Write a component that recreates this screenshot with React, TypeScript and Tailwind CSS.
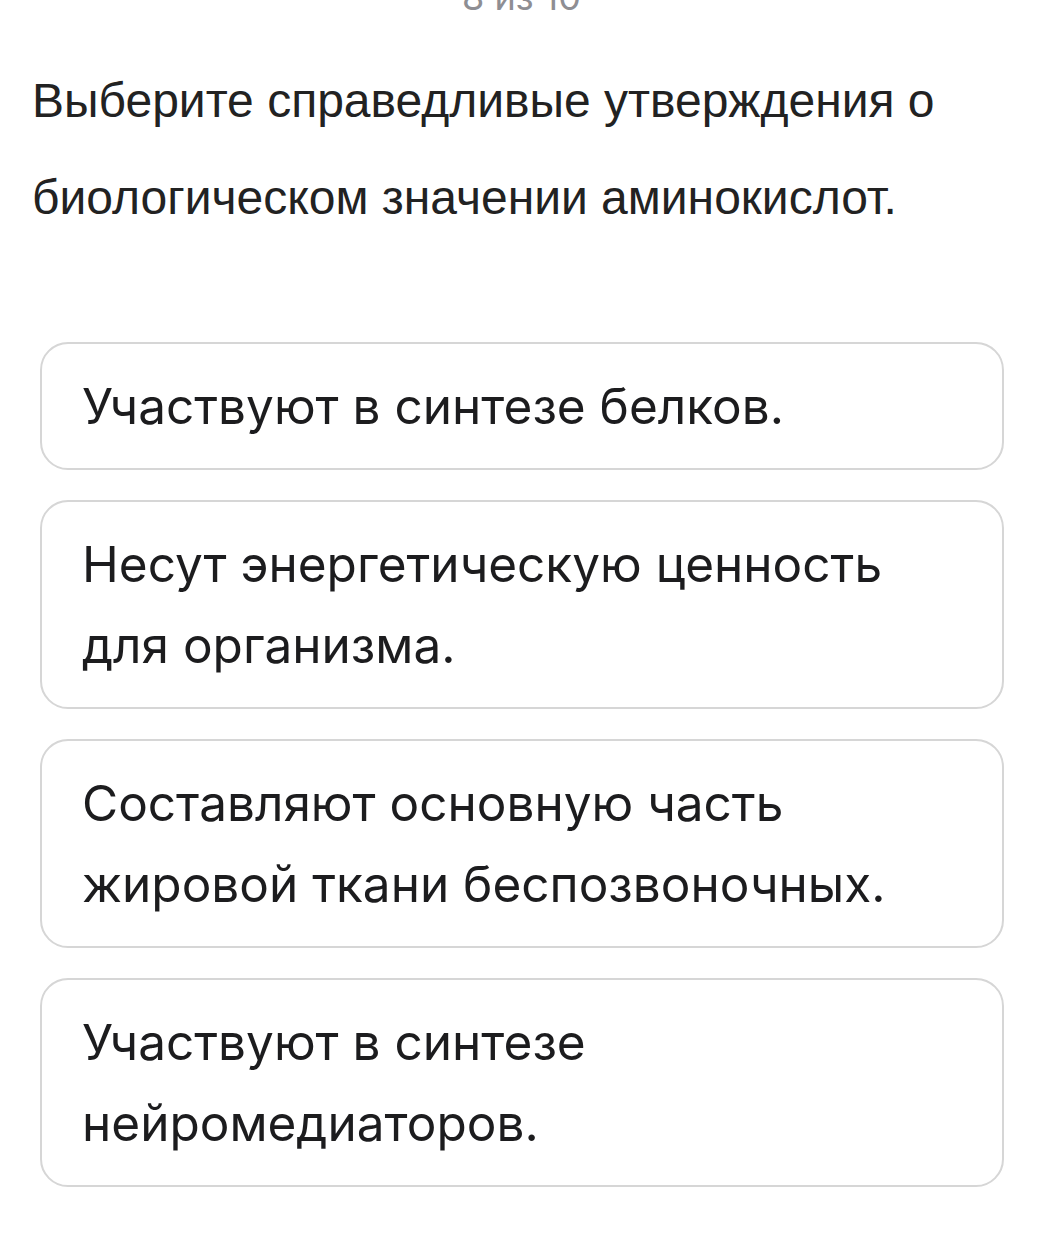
const options = [
  'Участвуют в синтезе белков.',
  'Несут энергетическую ценность для организма.',
  'Составляют основную часть жировой ткани беспозвоночных.',
  'Участвуют в синтезе нейромедиаторов.',
]

export default function App() {
  return (
    <div className="min-h-[1245px] bg-white text-[#1c1c1e] overflow-hidden flex flex-col">
      {/* progress counter, scrolled mostly out of view */}
      <div className="h-[19px] flex flex-col justify-end">
        <div className="shrink-0 text-center text-[36px] leading-[44px] text-[#8e8e93] pr-[18px] font-['Inter',sans-serif]">
          8 из 10
        </div>
      </div>
      <p className="pl-[32px] pr-[100px] pt-[33px] text-[48px] leading-[97px] text-[#222] font-['Liberation_Sans',Arial,sans-serif]">
        Выберите справедливые утверждения о биологическом значении аминокислот.
      </p>
      <div className="mt-[96px] pl-[40px] pr-[57px] flex flex-col gap-[30px] font-['Inter','Noto_Sans',sans-serif]">
        {options.map((o) => (
          <div
            key={o}
            className="rounded-[28px] border-2 border-[#d6d6d6] pl-[40px] pr-[100px] py-[21.5px] text-[49.5px] leading-[81px]"
          >
            {o}
          </div>
        ))}
      </div>
    </div>
  )
}
